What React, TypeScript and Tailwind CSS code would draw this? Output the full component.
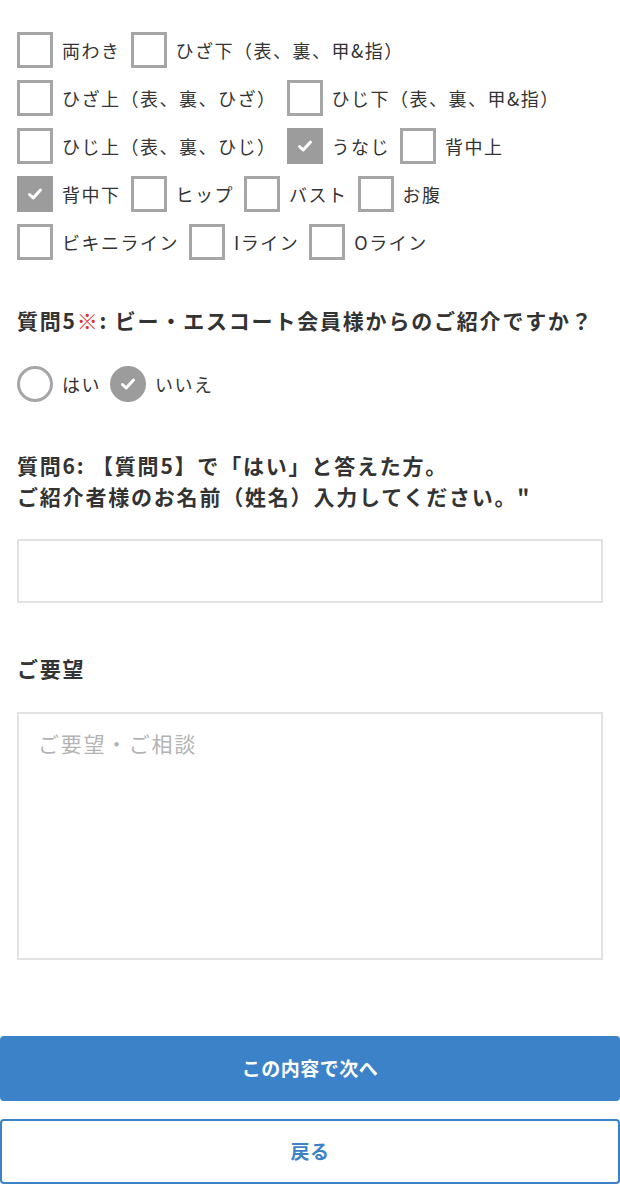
import { useState } from 'react';

const font = "font-['Noto_Sans_CJK_JP','Noto_Sans',sans-serif]";

const rows: { label: string; checked?: boolean }[][] = [
  [{ label: '両わき' }, { label: 'ひざ下（表、裏、甲&指）' }],
  [{ label: 'ひざ上（表、裏、ひざ）' }, { label: 'ひじ下（表、裏、甲&指）' }],
  [{ label: 'ひじ上（表、裏、ひじ）' }, { label: 'うなじ', checked: true }, { label: '背中上' }],
  [{ label: '背中下', checked: true }, { label: 'ヒップ' }, { label: 'バスト' }, { label: 'お腹' }],
  [{ label: 'ビキニライン' }, { label: 'Iライン' }, { label: 'Oライン' }],
];

const Check = () => (
  <svg width="16" height="14" viewBox="0 0 16 14" fill="none">
    <path d="M2.5 7.5 L6.2 11 L13.5 3" stroke="white" strokeWidth="3" strokeLinecap="round" strokeLinejoin="round" />
  </svg>
);

const CheckBox = ({ label, checked }: { label: string; checked?: boolean }) => (
  <label className="mr-[10px] flex items-center">
    <span
      className={`flex h-9 w-9 shrink-0 items-center justify-center border-[3px] ${
        checked ? 'border-[#9c9c9c] bg-[#9c9c9c]' : 'border-[#a6a6a6] bg-white'
      }`}
    >
      {checked && <Check />}
    </span>
    <span className="ml-[9px] text-[18px] leading-none tracking-[1.5px] whitespace-nowrap text-[#333]">{label}</span>
  </label>
);

const Radio = ({ label, checked }: { label: string; checked?: boolean }) => (
  <label className="mr-[9px] flex items-center">
    <span
      className={`flex h-9 w-9 shrink-0 items-center justify-center rounded-full border-[3px] ${
        checked ? 'border-[#9c9c9c] bg-[#9c9c9c]' : 'border-[#a6a6a6] bg-white'
      }`}
    >
      {checked && <Check />}
    </span>
    <span className="ml-[9px] text-[18px] leading-none tracking-[1.5px] whitespace-nowrap text-[#333]">{label}</span>
  </label>
);

export default function App() {
  const [name, setName] = useState('');
  const [note, setNote] = useState('');

  return (
    <div className={`min-h-[1200px] w-[620px] bg-white ${font}`}>
      <div className="px-[17px] pt-8">
        <div className="flex flex-col gap-3">
          {rows.map((row, i) => (
            <div key={i} className="flex items-center">
              {row.map((item) => (
                <CheckBox key={item.label} {...item} />
              ))}
            </div>
          ))}
        </div>

        <h3 className="mt-[45px] text-[21px] leading-[30px] font-bold tracking-[1.8px] text-[#333]">
          質問5<span className="text-[#e0312f]">※</span>: ビー・エスコート会員様からのご紹介ですか？
        </h3>
        <div className="mt-[31px] flex items-center">
          <Radio label="はい" />
          <Radio label="いいえ" checked />
        </div>

        <h3 className="mt-12 text-[21px] leading-[31px] font-bold tracking-[1.8px] text-[#333]">
          質問6: 【質問5】で「はい」と答えた方。
          <br />
          ご紹介者様のお名前（姓名）入力してください。"
        </h3>
        <input
          value={name}
          onChange={(e) => setName(e.target.value)}
          className="mt-[27px] block h-16 w-full border-2 border-[#e2e2e2] px-4 text-[19px] outline-none"
        />

        <h3 className="mt-[50px] text-[21px] leading-[30px] font-bold tracking-[1.8px] text-[#333]">ご要望</h3>
        <textarea
          value={note}
          onChange={(e) => setNote(e.target.value)}
          placeholder="ご要望・ご相談"
          className="mt-[29px] block h-[248px] w-full resize-none border-2 border-[#e2e2e2] px-[19px] py-[14px] text-[21px] tracking-[1.7px] text-[#333] outline-none placeholder:text-[#b3b3b3]"
        />
      </div>

      <div className="mt-[76px] flex flex-col gap-[18px]">
        <button className="h-[65px] w-full rounded-[4px] bg-[#3c82c8] text-[19px] font-bold tracking-[0.5px] text-white">
          この内容で次へ
        </button>
        <button className="h-[65px] w-full rounded-[4px] border-2 border-[#3c82c8] bg-white text-[19px] font-bold tracking-[0.5px] text-[#3c82c8]">
          戻る
        </button>
      </div>
    </div>
  );
}
